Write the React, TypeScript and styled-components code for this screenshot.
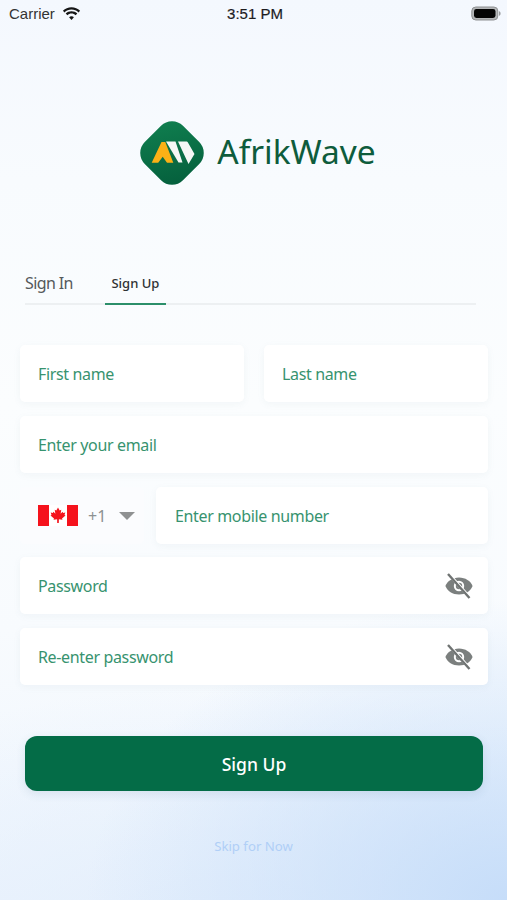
import styled, { createGlobalStyle } from 'styled-components'

const GlobalStyle = createGlobalStyle`
  html, body {
    margin: 0;
    padding: 0;
    height: 100%;
  }
  body {
    font-family: 'Noto Sans', 'Open Sans', sans-serif;
  }
`

const WifiIcon = () => (
  <svg width="19" height="14" viewBox="0 0 19 14" fill="#161616">
    <path d="M9.5 2.6c2.7 0 5.1 1 7 2.8l1.6-1.7C15.8 1.5 12.8.2 9.5.2S3.2 1.5.9 3.7l1.6 1.7c1.9-1.8 4.3-2.8 7-2.8z" />
    <path d="M9.5 6.6c1.6 0 3 .6 4.1 1.6l1.7-1.7C13.8 5 11.7 4.2 9.5 4.2S5.2 5 3.7 6.5l1.7 1.7c1.1-1 2.5-1.6 4.1-1.6z" />
    <path d="M9.5 9.2c-1 0-1.8.4-2.4 1l2.4 2.8 2.4-2.8c-.6-.6-1.4-1-2.4-1z" />
  </svg>
)

const BatteryIcon = () => (
  <svg width="30" height="15" viewBox="0 0 30 15">
    <rect x="0.8" y="1" width="26" height="13" rx="4" fill="#b4b6b8" stroke="#8e9092" strokeWidth="1" />
    <rect x="3" y="3" width="21.5" height="9" rx="2.4" fill="#050505" />
    <path d="M28 5.2c1 .3 1.6 1.2 1.6 2.3s-.6 2-1.6 2.3z" fill="#9a9c9e" />
  </svg>
)

const LogoMark = () => (
  <svg width="64" height="64" viewBox="0 0 64 64">
    <defs>
      <linearGradient id="markFill" x1="0" y1="0.2" x2="1" y2="0.8">
        <stop offset="0" stopColor="#0f7d4e" />
        <stop offset="1" stopColor="#05603d" />
      </linearGradient>
    </defs>
    <rect x="5" y="5" width="54" height="54" rx="15.5" fill="url(#markFill)" transform="rotate(45 32 32)" />
    <path d="M11.7 41.7 21.5 21h3.8l8 20.7H27l-4.3-6-4.5 6z" fill="#fbb116" />
    <path d="M26 20.5h9.5l7 21h-4z" fill="#f5f7f5" />
    <path d="M38 20.5h8c1 0 1.7.4 2.2 1.4L54.5 33l-6 10z" fill="#f5f7f5" />
  </svg>
)

const CanadaFlag = () => (
  <svg width="40" height="21" viewBox="0 0 40 21">
    <rect width="40" height="21" fill="#fff" />
    <rect width="11" height="21" fill="#f5121c" />
    <rect x="29" width="11" height="21" fill="#f5121c" />
    <path
      d="M20 2.6l-1.7 3-1.6-.8.7 4-2-2.1-.5 1.2-2.2-.4.8 2.6-1 .5 3.5 2.9-.5 1.3 3.6-.5.1 3.7h1.6l.1-3.7 3.6.5-.5-1.3 3.5-2.9-1-.5.8-2.6-2.2.4-.5-1.2-2 2.1.7-4-1.6.8z"
      fill="#f5121c"
    />
  </svg>
)

const EyeOffIcon = () => (
  <svg width="30" height="26" viewBox="0 0 30 26">
    <path
      d="M15 4.5C8.6 4.5 3.4 8 1.4 13c2 5 7.2 8.5 13.6 8.5S26.6 18 28.6 13c-2-5-7.2-8.5-13.6-8.5z"
      fill="#7b7f7e"
    />
    <circle cx="15" cy="13" r="5.2" fill="#fff" />
    <circle cx="15" cy="13" r="3.2" fill="#7b7f7e" />
    <path d="M5 1.2 25.5 24.2" stroke="#fff" strokeWidth="3.2" />
    <path d="M4 1 25.5 25" stroke="#6f7372" strokeWidth="2.4" />
  </svg>
)

const App = () => (
  <>
    <GlobalStyle />
    <Screen>
      <StatusBar>
        <StatusLeft>
          Carrier <WifiIcon />
        </StatusLeft>
        <Clock>3:51 PM</Clock>
        <StatusRight>
          <BatteryIcon />
        </StatusRight>
      </StatusBar>

      <Brand>
        <LogoMark />
        <BrandName>AfrikWave</BrandName>
      </Brand>

      <TabBar>
        <Tab>Sign In</Tab>
        <Tab $active>Sign Up</Tab>
      </TabBar>

      <Form>
        <Row>
          <Field $grow={224}>First name</Field>
          <Field $grow={224}>Last name</Field>
        </Row>
        <Field>Enter your email</Field>
        <PhoneRow>
          <CountryPicker>
            <CanadaFlag />
            <DialCode>+1</DialCode>
            <Caret />
          </CountryPicker>
          <Field $grow={1} $inset={19}>
            Enter mobile number
          </Field>
        </PhoneRow>
        <Field>
          Password
          <EyeOffIcon />
        </Field>
        <Field>
          Re-enter password
          <EyeOffIcon />
        </Field>
      </Form>

      <SubmitButton type="button">Sign Up</SubmitButton>
      <SkipLink>Skip for Now</SkipLink>
    </Screen>
  </>
)

export default App

const Screen = styled.div`
  width: 507px;
  height: 900px;
  overflow: hidden;
  display: flex;
  flex-direction: column;
  background:
    radial-gradient(ellipse 420px 300px at 100% 100%, #c6ddf9 0%, rgba(198, 221, 249, 0) 100%),
    radial-gradient(ellipse 520px 260px at 45% 105%, #e3eefc 0%, rgba(227, 238, 252, 0) 100%),
    linear-gradient(180deg, #f4f8fe 0%, #f8fbfe 20%, #fbfdfe 45%, #f8fbfe 70%, #eef5fd 100%);
`

const StatusBar = styled.div`
  height: 27px;
  padding: 0 6px 0 9px;
  display: grid;
  grid-template-columns: 1fr auto 1fr;
  align-items: center;
  font-family: 'Liberation Sans', sans-serif;
  font-size: 15px;
  color: #1c1c1e;
`

const StatusLeft = styled.div`
  display: flex;
  align-items: center;
  gap: 7px;
  color: #333;
`

const Clock = styled.div`
  -webkit-text-stroke: 0.2px #1c1c1e;
`

const StatusRight = styled.div`
  display: flex;
  justify-content: flex-end;
`

const Brand = styled.div`
  margin-top: 94px;
  padding-left: 9px;
  display: flex;
  justify-content: center;
  align-items: center;
  gap: 13px;
`

const BrandName = styled.div`
  padding-bottom: 3px;
  font-family: 'Noto Sans', sans-serif;
  font-size: 33.5px;
  line-height: 61px;
  color: #0e5c3c;
`

const TabBar = styled.div`
  margin: 78px 31px 0 25px;
  height: 40px;
  display: flex;
  gap: 32px;
  border-bottom: 2px solid #edf0f2;
`

const Tab = styled.div<{ $active?: boolean }>`
  height: 40px;
  padding: ${p => (p.$active ? '0 6.5px' : '0')};
  display: flex;
  align-items: center;
  font-size: ${p => (p.$active ? '13px' : '16px')};
  letter-spacing: ${p => (p.$active ? '0' : '-0.6px')};
  font-weight: ${p => (p.$active ? 500 : 400)};
  color: ${p => (p.$active ? '#2e3234' : '#55595b')};
  border-bottom: ${p => (p.$active ? '2px solid #2c8f6a' : 'none')};
`

const Form = styled.div`
  margin: 40px 19px 0 20px;
  display: flex;
  flex-direction: column;
  gap: 14px;
`

const Row = styled.div`
  display: flex;
  gap: 20px;
`

const PhoneRow = styled.div`
  display: flex;
  gap: 12px;
  height: 56px;
`

const Field = styled.div<{ $grow?: number; $inset?: number }>`
  flex: ${p => p.$grow ?? 'none'} 1 0;
  height: 57px;
  padding: 0 14px 0 ${p => p.$inset ?? 18}px;
  display: flex;
  align-items: center;
  justify-content: space-between;
  background: #fff;
  border-radius: 5px;
  box-shadow: 0 2px 7px rgba(120, 140, 160, 0.07);
  font-size: 16px;
  letter-spacing: -0.35px;
  color: #37936f;
`

const CountryPicker = styled.div`
  width: 124px;
  height: 57px;
  padding-left: 18px;
  box-sizing: border-box;
  display: flex;
  align-items: center;
  background: #fbfcfe;
  border-radius: 5px;
`

const DialCode = styled.span`
  margin-left: 10px;
  font-size: 16px;
  color: #8d9192;
`

const Caret = styled.span`
  margin-left: 13px;
  border-left: 8px solid transparent;
  border-right: 8px solid transparent;
  border-top: 8px solid #8f9192;
`

const SubmitButton = styled.button`
  margin: 51px 24px 0 25px;
  height: 55px;
  border: none;
  border-radius: 12px;
  background: #046c47;
  box-shadow: 0 3px 10px rgba(60, 100, 120, 0.12);
  font-family: inherit;
  font-size: 17.5px;
  font-weight: 500;
  color: #fff;
`

const SkipLink = styled.div`
  margin-top: 46px;
  text-align: center;
  font-size: 13.2px;
  color: #b0cff7;
`
